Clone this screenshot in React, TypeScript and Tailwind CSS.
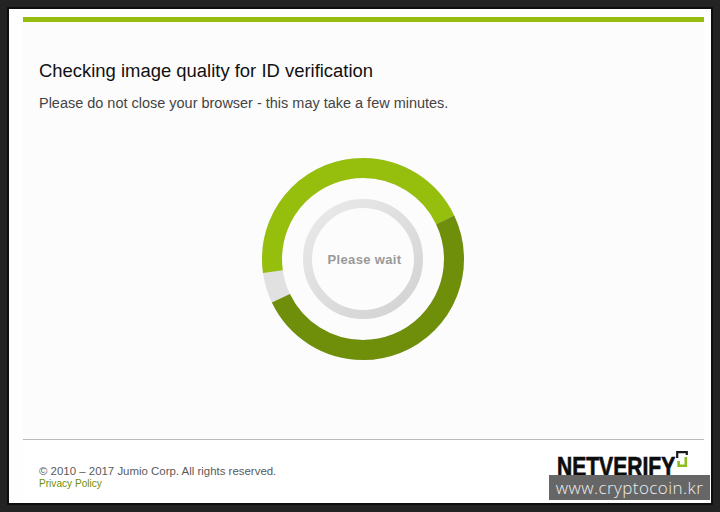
export default function App() {
  const R = 91;
  const C = 2 * Math.PI * R;
  const arc = (from: number, to: number) => ({
    strokeDasharray: `${((to - from) / 360) * C} ${C}`,
    strokeDashoffset: `${-(from / 360) * C}`,
  });
  return (
    <div className="relative h-[512px] w-[720px] overflow-hidden border-[7px] border-[#232323] font-['Liberation_Sans',Arial,sans-serif]">
      <div className="flex h-[498px] flex-col border-2 border-[#0e0e0e] bg-[#fefefe]">
        <div className="mx-[14px] mt-2 h-[5px] w-[681px] bg-[#95bc0e]" />
        <div className="mx-[14px] flex w-[681px] flex-1 flex-col bg-[#fcfcfc] px-4">
          <h1 className="mt-[38px] text-[18.45px] leading-[21px] font-normal text-[#111111]">Checking image quality for ID verification</h1>
          <p className="mt-[14px] text-[14.47px] leading-[17px] text-[#444444]">Please do not close your browser - this may take a few minutes.</p>
          <div className="mt-[45px] mr-[2px] grid h-[204px] w-[204px] place-items-center self-center">
            <svg width="204" height="204" viewBox="0 0 204 204" className="col-start-1 row-start-1">
              <defs>
                <linearGradient id="innerRing" x1="0.15" y1="0.1" x2="0.85" y2="0.9">
                  <stop offset="0" stopColor="#e7e7e7" />
                  <stop offset="1" stopColor="#d5d5d5" />
                </linearGradient>
              </defs>
              <g transform="rotate(-90 102 102)" fill="none" strokeWidth="20">
                <circle cx="102" cy="102" r={R} stroke="#e1e1e1" />
                <circle cx="102" cy="102" r={R} stroke="#96bf0d" style={arc(261.5, 360)} />
                <circle cx="102" cy="102" r={R} stroke="#96bf0d" style={arc(0, 64.4)} />
                <circle cx="102" cy="102" r={R} stroke="#6f8f0a" style={arc(64.4, 244)} />
              </g>
              <circle cx="102" cy="102" r="55.5" fill="none" stroke="url(#innerRing)" strokeWidth="9" />
            </svg>
            <span className="col-start-1 row-start-1 mt-[2px] ml-[4px] text-[13px] font-bold tracking-[0.35px] text-[#999999]">Please wait</span>
          </div>
        </div>
        <div className="mx-[14px] flex h-[64px] w-[681px] justify-between border-t border-[#b9b9b9] bg-white pl-4">
          <div className="pt-[25px] text-[11.45px] leading-[12px] text-[#5a5a5a]">
            <p>© 2010 – 2017 Jumio Corp. All rights reserved.</p>
            <p className="mt-[1px] text-[10.1px] text-[#6f8f0a]">Privacy Policy</p>
          </div>
          <div className="flex items-start pt-[11px] pr-[16px]">
            <div className="mt-[3px] h-[26px] w-[118px]">
              <span className="inline-block origin-left scale-x-[0.78] text-[27px] leading-[26px] font-bold text-[#0d0d0d] [-webkit-text-stroke:0.7px_#0d0d0d]">NETVERIFY</span>
            </div>
            <svg width="12" height="17" viewBox="0 0 12 17" className="ml-[1px]">
              <path d="M1.2 7V1.2h9.6V4" fill="none" stroke="#1a1a1a" strokeWidth="2.2" />
              <path d="M9.8 6v8.8H2.6V10" fill="none" stroke="#8fbc1e" strokeWidth="2.6" />
            </svg>
          </div>
        </div>
      </div>
      <div className="absolute top-[468px] left-[542px] flex h-[25px] w-[161px] items-center justify-center bg-[#666666] font-['Open_Sans',sans-serif] text-[17px] font-light tracking-[0.45px] text-[#eeeeee]">www.cryptocoin.kr</div>
    </div>
  );
}
